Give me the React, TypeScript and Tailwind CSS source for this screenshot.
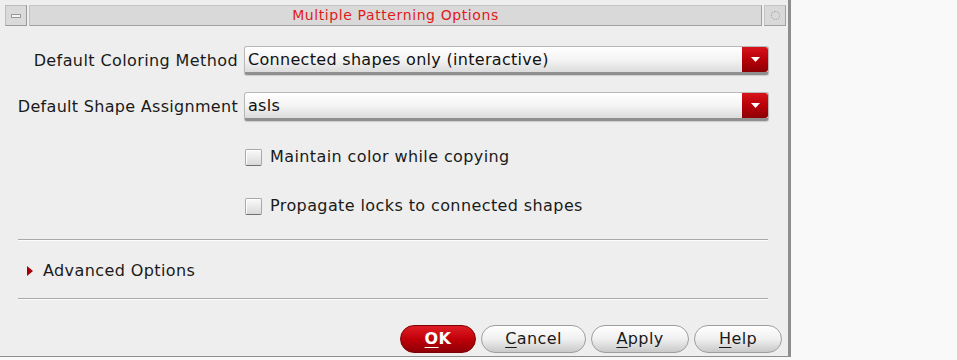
const font = { fontFamily: '"DejaVu Sans", Verdana, sans-serif' };

function Dropdown({ value }: { value: string }) {
  return (
    <div className="flex h-[29px] w-[525px] rounded-[3px] border border-[#b9b9b9] border-b-[3px] border-b-[#8f8f8f] bg-gradient-to-b from-[#ffffff] via-[#f4f4f4] to-[#dcdcdc] shadow-[0_1px_1px_rgba(0,0,0,0.15)]">
      <div className="flex flex-1 items-center pl-[3px] text-[16px] tracking-[0.3px] text-[#111]">{value}</div>
      <div className="flex w-[26px] items-center justify-center rounded-r-[3px] bg-gradient-to-b from-[#d8121a] via-[#b80008] to-[#8c0005]">
        <svg width="11" height="7" viewBox="0 0 11 7">
          <path d="M1 1 L10 1 L5.5 6 Z" fill="#ffffff" />
        </svg>
      </div>
    </div>
  );
}

function Checkbox({ label }: { label: string }) {
  return (
    <div className="flex items-center gap-[8px]">
      <div className="h-[17px] w-[17px] rounded-[2px] border border-[#a8a8a8] border-b-[#6f6f6f] bg-gradient-to-b from-[#fafafa] to-[#d9d9d9] shadow-[inset_1px_1px_0_#fff]" />
      <span className="text-[16px] tracking-[0.4px] text-[#1a1a1a]">{label}</span>
    </div>
  );
}

function PillButton({ label, width, primary }: { label: string; width: string; primary?: boolean }) {
  const first = label.charAt(0);
  const rest = label.slice(1);
  return (
    <button
      className={
        primary
          ? `${width} flex h-[28px] items-center justify-center rounded-full border border-[#7d0006] bg-gradient-to-b from-[#e01b22] via-[#c00009] to-[#8f0006] text-[16px] font-bold tracking-[0.4px] text-white`
          : `${width} flex h-[28px] items-center justify-center rounded-full border border-[#9e9e9e] bg-gradient-to-b from-[#ffffff] via-[#f0f0f0] to-[#c9c9c9] text-[16px] tracking-[0.4px] text-[#1a1a1a]`
      }
      style={font}
    >
      <span className="underline underline-offset-[3px]">{first}</span>
      <span>{rest}</span>
    </button>
  );
}

export default function App() {
  return (
    <div className="flex h-[360px] w-[957px] bg-[#f9f9f9]" style={font}>
      <div className="flex h-[357px] w-[791px] flex-col border-r-[3px] border-b border-[#8e8e8e] bg-[#eeeeee] pt-[5px]">
        {/* title bar */}
        <div className="flex h-[21px] gap-[2px] pl-[5px] pr-[2px]">
          <div className="flex w-[22px] items-center justify-center border border-[#bcbcbc] border-b-[#9a9a9a] border-r-[#9a9a9a] bg-[#dadada]">
            <div className="h-[4px] w-[10px] border border-[#9a9a9a] bg-[#f4f4f4]" />
          </div>
          <div className="flex flex-1 items-center justify-center border border-[#c4c4c4] border-b-[#a0a0a0] border-r-[#a0a0a0] bg-[#d9d9d9] text-[14px] tracking-[0.6px] text-[#e01b1b]">
            Multiple Patterning Options
          </div>
          <div className="flex w-[22px] items-center justify-center border border-[#c4c4c4] border-b-[#a0a0a0] border-r-[#a0a0a0] bg-[#d9d9d9]">
            <div className="h-[9px] w-[9px] rounded-full border border-dotted border-[#9a9a9a]" />
          </div>
        </div>

        {/* combo rows */}
        <div className="mt-[20px] grid grid-cols-[238px_525px] items-center gap-x-[6px] gap-y-[17px]">
          <div className="text-right text-[16px] tracking-[0.4px] text-[#1a1a1a]">Default Coloring Method</div>
          <Dropdown value="Connected shapes only (interactive)" />
          <div className="text-right text-[16px] tracking-[0.3px] text-[#1a1a1a]">Default Shape Assignment</div>
          <Dropdown value="asls" />
        </div>

        {/* checkboxes */}
        <div className="ml-[245px] mt-[24px] flex flex-col gap-[25px]">
          <Checkbox label="Maintain color while copying" />
          <Checkbox label="Propagate locks to connected shapes" />
        </div>

        <div className="ml-[18px] mr-[20px] mt-[21px] h-[2px] border-t border-[#a9a9a9] bg-[#fbfbfb]" />

        <div className="ml-[27px] mt-[20px] flex h-[20px] items-center gap-[10px]">
          <svg width="6" height="10" viewBox="0 0 6 10">
            <path d="M0 0 L6 5 L0 10 Z" fill="#a5000a" />
          </svg>
          <span className="text-[16px] tracking-[0.4px] text-[#1a1a1a]">Advanced Options</span>
        </div>

        <div className="ml-[18px] mr-[20px] mt-[17px] h-[2px] border-t border-[#a9a9a9] bg-[#fbfbfb]" />

        <div className="mr-[6px] mt-[25px] flex justify-end gap-[5px]">
          <PillButton label="OK" width="w-[76px]" primary />
          <PillButton label="Cancel" width="w-[105px]" />
          <PillButton label="Apply" width="w-[98px]" />
          <PillButton label="Help" width="w-[88px]" />
        </div>
      </div>
    </div>
  );
}
